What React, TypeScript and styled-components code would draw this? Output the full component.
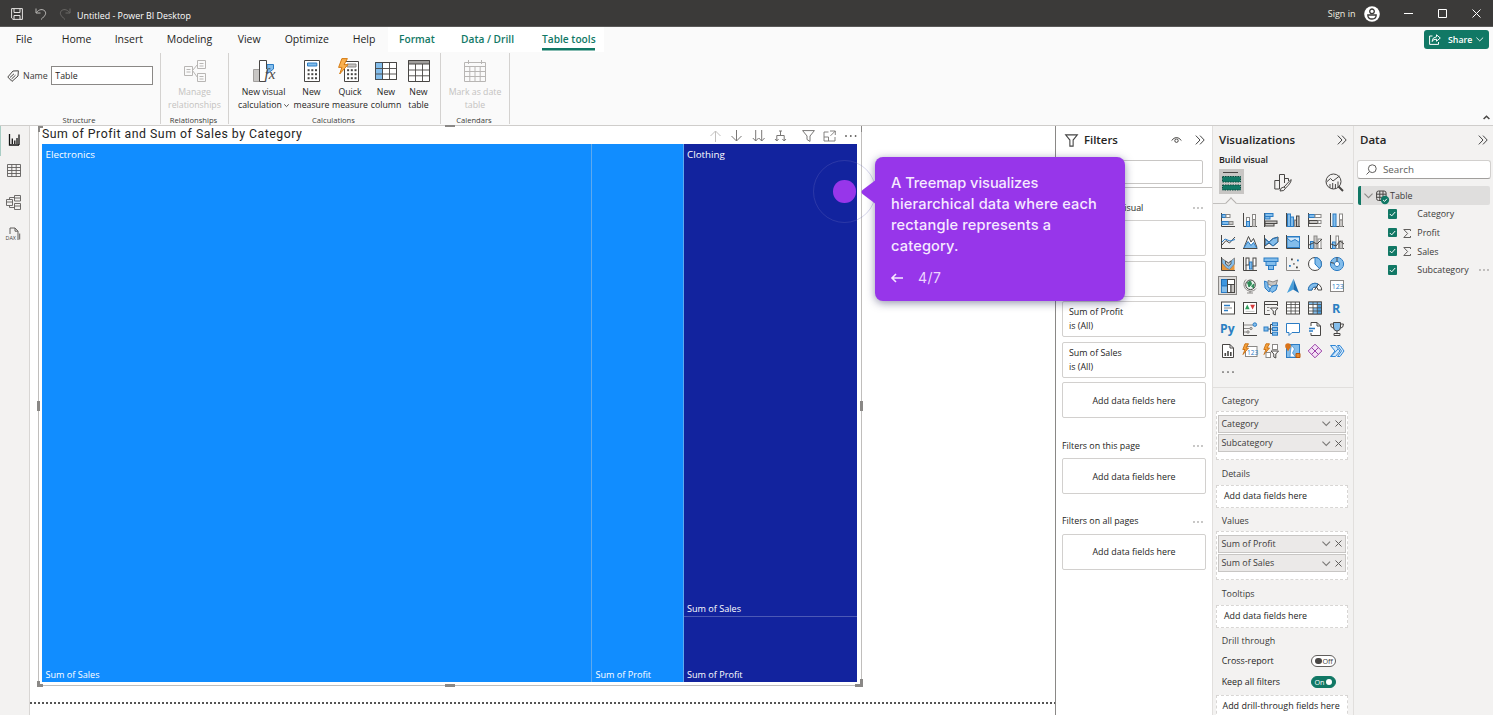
import React from "react";
import styled, { createGlobalStyle } from "styled-components";

const GREEN = "#117865";
const PURPLE = "#9736ea";
const UI = '"Open Sans", "Noto Sans", sans-serif';

const Global = createGlobalStyle`
  * { box-sizing: border-box; }
  html, body { margin: 0; padding: 0; overflow: hidden; }
  body { font-family: ${UI}; color: #252423; font-size: 9px; }
  svg { display: block; flex: none; overflow: visible; }
`;

const Window = styled.div`
  width: 1493px; height: 715px; display: flex; flex-direction: column;
  background: #fff; overflow: hidden; position: relative;
`;

const Text = styled.span<{ $s?: number; $w?: number; $c?: string; $ls?: number }>`
  font-size: ${(p) => p.$s ?? 9}px;
  font-weight: ${(p) => p.$w ?? 400};
  color: ${(p) => p.$c ?? "#252423"};
  letter-spacing: ${(p) => p.$ls ?? 0}px;
  white-space: nowrap;
  line-height: 12px;
`;

const Spacer = styled.div`flex: 1;`;

/* ---------- title bar ---------- */
const TitleBar = styled.header`
  height: 27px; background: #3b3a39; display: flex; align-items: center;
  padding: 1px 12px 0 11px; border-bottom: 1px solid #5a5958; flex: none;
`;
const QuickAccess = styled.div`display: flex; gap: 12px; width: 66px; align-items: center;`;
const DocTitle = styled(Text)`padding-top: 5px;`;
const SignIn = styled(Text)`margin-right: 8px;`;
const WindowButtons = styled.div`display: flex; align-items: center; gap: 25px; margin-left: 24.5px;`;

/* ---------- tabs ---------- */
const TabBar = styled.nav`
  height: 25px; background: #fafafa; display: flex; align-items: stretch; padding-left: 15.7px; flex: none;
`;
const Tab = styled.div<{ $w: number; $hot?: boolean }>`
  width: ${(p) => p.$w}px; flex: none; display: flex; align-items: center; padding-bottom: 2px;
  font-size: 10.5px; white-space: nowrap; color: ${(p) => (p.$hot ? GREEN : "#252423")};
  font-weight: ${(p) => (p.$hot ? 600 : 400)};
`;
const HotTabs = styled.div`
  display: flex; background: #fff; padding: 0 9px 0 11px; height: 25px; margin-left: -10.7px;
  ${Tab} { font-size: 10.2px; }
`;
const ActiveTab = styled(Tab)`box-shadow: inset 0 -1.5px 0 #fff, inset 0 -4px 0 ${GREEN};`;
const ShareButton = styled.button`
  margin: 3px 4px 0 auto; width: 65px; height: 18.5px; border: 0; border-radius: 3px; background: ${GREEN};
  color: #fff; display: flex; align-items: center; padding: 0 6px 0 5px; font-family: ${UI};
  ${Text} { margin: 1px 4px 0 7px; }
`;

/* ---------- ribbon ---------- */
const Ribbon = styled.section`
  height: 74px; background: #fafafa; border-bottom: 1px solid #cfcdcb; display: flex; flex: none;
`;
const Group = styled.div<{ $w: number }>`
  width: ${(p) => p.$w}px; height: 71px; position: relative; flex: none; display: flex; flex-direction: column;
  border-right: 1px solid #d4d2d0; margin-top: 1px;
`;
const GroupBody = styled.div`flex: 1; display: flex; padding-top: 7px;`;
const GroupName = styled.div`
  height: 12px; line-height: 12px; margin: 0 2px -2px 0; text-align: center; font-size: 7.6px; color: #3b3a39;
`;
const Command = styled.div<{ $w: number; $off?: boolean }>`
  width: ${(p) => p.$w}px; flex: none; display: flex; flex-direction: column; align-items: center;
  color: ${(p) => (p.$off ? "#c4c2c0" : "#252423")}; font-size: 8.75px; line-height: 12.5px; text-align: center;
  white-space: nowrap;
  svg { margin-bottom: 4px; }
`;
const CommandLine = styled.span`display: flex; align-items: center; gap: 2px; height: 12.5px; svg { margin: 1px 0 0; }`;
const NameField = styled.div`display: flex; align-items: center; height: 20px; margin: 5.5px 0 0 7px;
  & > ${Text} { padding: 1px 0 0 4px; }
`;
const NameInput = styled.div`
  width: 101.5px; height: 19px; border: 1px solid #8a8886; background: #fff; margin-left: 3.5px; padding: 1px 0 0 3px;
  display: flex; align-items: center;
`;

/* ---------- workspace ---------- */
const Workspace = styled.main`flex: 1; display: flex; min-height: 0;`;
const Rail = styled.aside`
  width: 30px; background: linear-gradient(#a9cdc4, #a9cdc4) 0 0 / 1px 30px no-repeat #f3f2f1;
  border-right: 1px solid #d8d6d4; flex: none; display: flex;
  flex-direction: column; align-items: center; padding: 7px 1.5px 0 0; gap: 17.3px;
`;
const Canvas = styled.section`
  width: 1025px; flex: none; display: flex; flex-direction: column; background: #fff; padding-left: 8px;
`;
const Visual = styled.div`
  width: 823.5px; height: 560px; border: 1px solid #c0bebc; border-top: 0; position: relative;
  display: flex; flex-direction: column; padding: 0 3.5px 3px 2.5px;
`;
const VisualHeader = styled.div`height: 18px; display: flex; align-items: center; flex: none;`;
const VisualTitle = styled.h1`
  margin: -3px 0 0 0.5px; font: 400 12.3px/14px Roboto, sans-serif; letter-spacing: 0.51px; flex: 1; white-space: nowrap;
`;
const VisualTools = styled.div`display: flex; align-items: center; gap: 8.7px; height: 18px; padding-top: 1px; margin-right: 0.5px;`;
const Handle = styled.i<{ $p: string; $h?: string }>`
  position: absolute; ${(p) => p.$p}; background: #8a8886; ${(p) => p.$h}
`;
const Treemap = styled.div`
  flex: 1; display: grid; grid-template-columns: 550px 92px 1fr; min-height: 0;
  color: #fff; font-size: 9.8px; line-height: 12px;
`;
const Leaf = styled.div<{ $bg: string; $r?: boolean }>`
  background: ${(p) => p.$bg}; padding: 5px 4px 1px; display: flex; flex-direction: column;
  justify-content: space-between; border-right: ${(p) => (p.$r ? "1px solid #5ea9ee" : "0")};
  span:last-child { font-size: 9.1px; }
`;
const Root = styled.span`flex: 1;`;
const Branch = styled.div`display: grid; grid-template-rows: 472px 1fr; min-height: 0;
  ${Leaf} { padding-left: 3.5px; }
  ${Leaf} + ${Leaf} { border-top: 1px solid #4c59b5; }
`;
const PageEdge = styled.div`
  height: 2px; margin: 15.5px 0 0 -8px;
  background: repeating-linear-gradient(90deg, #555 0 2px, #fff 2px 4px);
`;

/* ---------- panes ---------- */
const Pane = styled.aside<{ $w: number; $bg: string; $l?: string }>`
  width: ${(p) => p.$w}px; flex: none; background: ${(p) => p.$bg}; border-left: 1px solid ${(p) => p.$l ?? "#e1dfdd"};
  display: flex; flex-direction: column; overflow: hidden;
`;
const PaneHeader = styled.div<{ $l: number; $r: number }>`
  height: 28px; flex: none; display: flex; align-items: center; padding: 0 ${(p) => p.$r}px 0 ${(p) => p.$l}px;
`;
const FilterSearch = styled.div`height: 24px; margin: 6px 9px 3px 6px; border: 1px solid #c8c6c4; border-radius: 2px; flex: none;`;
const Rule = styled.div`height: 1px; background: #c2c0be; flex: none;`;
const FilterHeading = styled.div<{ $t: number }>`
  height: 26px; margin-top: ${(p) => p.$t}px; padding: 1px 9px 0 6px; display: flex; align-items: center;
  justify-content: space-between; flex: none;
  svg { margin-top: 1px; }
`;
const Cards = styled.div`display: flex; flex-direction: column; gap: 4.5px; padding: 0 6px;`;
const Card = styled.div<{ $c?: boolean }>`
  height: 36px; border: 1px solid #d2d0ce; border-radius: 2px; background: #fff; flex: none;
  font-size: 8.9px; line-height: 14px; padding: 3px 6px; white-space: pre-line; color: #252423;
  ${(p) => p.$c && "text-align: center; padding-top: 10.5px;"}
`;

const Modes = styled.div`
  height: 36.5px; flex: none; display: flex; align-items: flex-start; border-bottom: 1px solid #c2c0be; padding: 1.5px 0 0 6px;
  position: relative;
`;
const ModeTile = styled.div`width: 25px; height: 25px; background: #c8c6c4; display: grid; place-items: center; margin: 0.5px 30px 0 0;`;
const ModeIcon = styled.div<{ $r?: number }>`margin: 4px ${(p) => p.$r ?? 0}px 0 0;`;
const Notch = styled.i`
  position: absolute; left: 14px; bottom: -4.5px; width: 8px; height: 8px; transform: rotate(45deg);
  background: #f3f2f1; border: solid #b3b0ad; border-width: 1px 0 0 1px;
`;
const Gallery = styled.div`
  display: grid; grid-template-columns: repeat(6, 21.8px); grid-auto-rows: 21.8px; place-items: center;
  padding: 6px 0 0 4px; flex: none;
`;
const Tile = styled.div<{ $on?: boolean }>`
  width: 19px; height: 19px; display: grid; place-items: center;
  border: 1px solid ${(p) => (p.$on ? "#8a8886" : "transparent")}; background: ${(p) => (p.$on ? "#dddbd9" : "none")};
`;
const More = styled.div`height: 25.5px; padding: 8.5px 0 0 9px; border-bottom: 1px solid #e1dfdd; flex: none;`;
const WellName = styled.div<{ $h: number; $t?: number }>`
  height: ${(p) => p.$h}px; padding: ${(p) => p.$t ?? 4}px 0 0 8.7px; display: flex; align-items: center; flex: none;
`;
const Well = styled.div<{ $h: number; $pl?: number }>`
  height: ${(p) => p.$h}px; margin: 0 5px 0 3px; background: #fff; border: 1px dashed #d8d6d4; flex: none;
  display: flex; flex-direction: column; padding: 2.5px 1px 0 0.5px; gap: 1.5px;
  & > ${Text} { padding: 1.5px 0 0 ${(p) => p.$pl ?? 6.5}px; }
`;
const Chip = styled.div`
  height: 18.2px; background: #ebe9e8; border: 1px solid #c8c6c4; display: flex; align-items: center;
  padding: 0 3px 0 3px; gap: 5px; flex: none;
`;
const ToggleRow = styled.div<{ $h: number }>`
  height: ${(p) => p.$h}px; display: flex; align-items: center; padding: 0 17px 0 8.7px; justify-content: space-between; flex: none;
`;
const Toggle = styled.div<{ $on?: boolean }>`
  width: 25px; height: 12.5px; border-radius: 7px; border: 1px solid ${(p) => (p.$on ? GREEN : "#605e5c")};
  background: ${(p) => (p.$on ? GREEN : "#fff")}; color: ${(p) => (p.$on ? "#fff" : "#3b3a39")};
  display: flex; flex-direction: ${(p) => (p.$on ? "row-reverse" : "row")}; align-items: center; gap: 1px;
  padding: 0 3px; font-size: 7.2px; line-height: 10px;
  &::before { content: ""; width: 6.5px; height: 6.5px; flex: none; border-radius: 50%; background: ${(p) => (p.$on ? "#fff" : "#484644")}; }
`;

const DataSearch = styled.div`
  height: 19px; margin: 6px 2px 7px 3px; background: #fff; border: 1px solid #d2d0ce; border-bottom-color: #a19f9d; border-radius: 3px;
  display: flex; align-items: center; padding-left: 8px; gap: 6px; flex: none;
`;
const TableRow = styled.div`
  height: 19px; margin: 0 3px 0 3.5px; background: #dfdedd; border-left: 3px solid ${GREEN}; border-radius: 2px;
  display: flex; align-items: center; padding-left: 3px; flex: none;
`;
const FieldRow = styled.div`height: 18.7px; display: flex; align-items: center; padding: 0 4px 0 33.5px; flex: none;`;
const Checkbox = styled.div`width: 9.5px; height: 9.5px; background: ${GREEN}; border-radius: 1px; display: grid; place-items: center; margin-top: -1px;`;
const SigmaSlot = styled.div`width: 20.3px; padding-left: 6px;`;

/* ---------- tour ---------- */
const Beacon = styled.div`
  position: absolute; left: 813px; top: 160px; width: 63px; height: 63px; border-radius: 50%;
  border: 1px solid rgba(110, 110, 190, 0.28); display: grid; place-items: center;
  &::after { content: ""; width: 22.5px; height: 22.5px; border-radius: 50%; background: ${PURPLE}; }
`;
const Callout = styled.div`
  position: absolute; left: 875px; top: 157px; width: 250px; height: 144px; border-radius: 8px; background: ${PURPLE};
  box-shadow: 0 2px 9px rgba(40, 40, 90, 0.5); padding: 15.5px 16px; color: #f6e9ff;
`;
const Pointer = styled.svg`position: absolute; left: -14.5px; top: 22px;`;
const CalloutText = styled.p`margin: 0; font: 500 14.6px/21px Inter, sans-serif; letter-spacing: 0.16px; white-space: pre-line;
  &::first-line { letter-spacing: -0.05px; }
`;
const Steps = styled.div`display: flex; align-items: center; gap: 15px; margin-top: 11.5px; font: 400 14px/20px Inter, sans-serif; letter-spacing: 0.4px; color: #ecd5ff;`;

/* ---------- drawings ---------- */
type SP = { w?: number; h?: number; vb?: string; c?: string; sw?: number; children: React.ReactNode };
const Svg = ({ w = 16, h = w, vb, c = "#444", sw = 1, children }: SP) => (
  <svg width={w} height={h} viewBox={vb ?? `0 0 ${w} ${h}`} fill="none" stroke={c} strokeWidth={sw}>{children}</svg>
);
const ChevDown = ({ w = 8, c = "#797775", sw = 1 }: { w?: number; c?: string; sw?: number }) => (
  <Svg w={w} h={w * 0.6} vb="0 0 10 6" c={c} sw={sw * 1.2}><path d="M.5 .8 5 5.2 9.5 .8" /></Svg>
);
const Collapse = () => <Svg w={10} h={10} c="#444"><path d="M.8 .6 5 5 .8 9.4M5 .6 9.2 5 5 9.4" /></Svg>;
const Dots = ({ c = "#605e5c", s = 1, g = 4 }: { c?: string; s?: number; g?: number }) => (
  <Svg w={g * 2 + 2} h={2} c="none"><g fill={c}><circle cx="1" cy="1" r={s * 0.7} /><circle cx={1 + g} cy="1" r={s * 0.7} /><circle cx={1 + 2 * g} cy="1" r={s * 0.7} /></g></Svg>
);

const K = "#484644", BL = "#83bdeb", BS = "#2b7cc4", GR = "#c8c6c4", GS = "#8a8886";
const Box = ({ x, y, w, h, f = "none", s = "none" }: { x: number; y: number; w: number; h: number; f?: string; s?: string }) => (
  <rect x={x} y={y} width={w} height={h} fill={f} stroke={s} />
);
const Axes = () => <path d="M1.5 1V14.5H15" stroke={K} />;
const Axis = () => <path d="M1.5 1V15" stroke={K} />;

const visuals: React.ReactNode[] = [
  <><Axes /><Box x={2} y={2.5} w={4} h={3} f={BL} s={BS} /><Box x={6} y={2.5} w={4} h={3} f="#fff" s={GS} /><Box x={2} y={9.5} w={7} h={3} f={BL} s={BS} /><Box x={9} y={9.5} w={4} h={3} f={GR} s={GS} /></>,
  <><Axes /><Box x={4.5} y={5.5} w={3} h={4} f="#fff" s={GS} /><Box x={4.5} y={9.5} w={3} h={5} f={BL} s={BS} /><Box x={10.5} y={2.5} w={3} h={5} f="#fff" s={GS} /><Box x={10.5} y={7.5} w={3} h={7} f={GR} s={GS} /></>,
  <><Axis /><Box x={2} y={1.5} w={8} h={3} f={BL} s={BS} /><Box x={2} y={4.5} w={5} h={2.5} f={BL} s={BS} /><Box x={2} y={9} w={12} h={2.5} f={GR} s={K} /><Box x={2} y={11.5} w={9} h={2.5} f={GR} s={K} /></>,
  <><Axes /><Box x={2.5} y={2} w={3} h={12.5} f={BL} s={BS} /><Box x={5.5} y={5} w={3} h={9.5} f={BL} s={BS} /><Box x={9.5} y={8} w={2} h={6.5} f={GR} s={GS} /><Box x={11.5} y={4} w={2.5} h={10.5} f={GR} s={K} /></>,
  <><Axis /><Box x={2} y={2.5} w={6} h={3} f={BL} s={BS} /><Box x={8} y={2.5} w={6} h={3} f="#fff" s={GS} /><Box x={2} y={8.5} w={9} h={3} f={GR} s={K} /><Box x={11} y={8.5} w={3} h={3} f="#fff" s={GS} /><path d="M1.5 14.5H14" stroke={GS} /></>,
  <><Axes /><Box x={4} y={2} w={3} h={12.5} f={BL} s={BS} /><Box x={10.5} y={2} w={3} h={6} f="#fff" s={GS} /><Box x={10.5} y={8} w={3} h={6.5} f={GR} s={GS} /></>,
  <><Axes /><path d="M2 11 6 6.5 9.5 9 15 3" stroke={K} /><path d="M2 8 5 5 10 7 15 5.5" stroke={BS} /></>,
  <><path d="M2 13.5 6.5 2.5 9 8 11.5 4.5 15 13.5Z" fill="#fff" stroke={K} /><path d="M1.5 14.5 6 7.5 9 11.5 11.5 8.5 15 14.5Z" fill={BL} stroke={BS} /><path d="M1 14.5H15.3" stroke={K} /></>,
  <><path d="M2 5 6 8 10 4.5 15 3V8L10 12 6 9 2 12Z" fill={BL} /><path d="M2 11 6 8.5 10 12 15 8M2 4.5 6 8 10 4.5 15 3.5" stroke={BS} /><Axes /></>,
  <><Box x={2} y={2.5} w={12.5} h={11} f={BL} s={BS} /><path d="M2 4 6 7.5 10 5.5 14.5 8.5V3H2Z" fill="#d5e9fa" stroke={BS} /><Axes /></>,
  <><Axes /><Box x={3.5} y={7.5} w={3} h={7} f={BL} s={BS} /><Box x={7} y={2} w={3} h={12.5} f={GR} s={GS} /><Box x={11} y={5} w={3} h={9.5} f="#fff" s={GS} /><path d="M2 11 7 8.5 10 10 15 5" stroke={K} /></>,
  <><Axes /><Box x={3.5} y={8} w={3} h={6.5} f={BL} s={BS} /><Box x={7} y={2} w={2.5} h={12.5} f="#fff" s={GS} /><Box x={10.5} y={7} w={3} h={7.5} f={GR} s={GS} /><path d="M2 10 7 12 11 7 15 10" stroke={K} /></>,
  <><Box x={2} y={8} w={12.5} h={6.5} f="#e8973c" /><path d="M2 2.5 5.5 5 8.5 7 14.5 2V8L9.5 13.5 6.5 12 2 7Z" fill={BL} stroke={GS} /><path d="M5.5 5 8.5 7 11 5V8L8.5 10 5.5 8Z" fill={GR} stroke={K} strokeWidth=".8" /><Axes /></>,
  <><Axes /><Box x={4} y={2} w={3} h={7} f="#fff" s={K} /><Box x={7.5} y={6} w={2.5} h={7} f={BL} s={BS} /><Box x={11} y={2} w={3} h={8} f="#fff" s={K} /><path d="M4 9V14M11 10V14" stroke={K} /></>,
  <><Box x={1} y={2} w={14} h={3.5} f={BL} s={BS} /><Box x={3} y={5.5} w={10} h={4} f={BL} s={BS} /><Box x={5.5} y={9.5} w={5} h={4} f={BL} s={BS} /></>,
  <><path d="M1.5 1V14.5H15" stroke={GS} /><g fill={K} stroke="none"><rect x="6" y="2.5" width="1.8" height="1.8" /><rect x="12" y="3.5" width="1.8" height="1.8" fill={BS} /><rect x="4" y="9" width="1.8" height="1.8" fill={BS} /><rect x="8" y="7" width="1.8" height="1.8" fill={GS} /><rect x="11" y="10.5" width="1.8" height="1.8" /></g></>,
  <><circle cx="8" cy="8" r="6.5" fill="#fff" stroke={K} /><path d="M8 8V1.5A6.5 6.5 0 0 1 12.5 12.7Z" fill={BL} stroke={BS} /></>,
  <><circle cx="8" cy="8" r="4.6" stroke={BL} strokeWidth="3.6" /><circle cx="8" cy="8" r="6.6" stroke={BS} /><circle cx="8" cy="8" r="2.6" fill="#fff" stroke={BS} /><path d="M8 1.4V5.4M1.6 6.5 5 7.2" stroke={K} /></>,
  <><Box x={1.5} y={1.5} w={6} h={6.5} f="#3c96e0" s="#1d6bb0" /><Box x={1.5} y={8} w={6} h={6.5} f={BL} s={BS} /><Box x={7.5} y={1.5} w={7} h={5} f="#fff" s={K} /><Box x={7.5} y={6.5} w={3.5} h={8} f="#fff" s={K} /><Box x={11} y={6.5} w={3.5} h={8} f={GR} s={K} /></>,
  <><circle cx="8.5" cy="6.8" r="4.8" fill="#e8f3ec" stroke={K} /><path d="M5.5 4.5 8.5 3 9.5 6 7 9ZM9.5 8 12 6 11.5 10Z" fill="#2e8b57" stroke="#2e8b57" /><path d="M4 1.5C0 5 2 12.5 8 13.2 11 13.4 13 12 14 10.5M8 13V15M5 15H11" stroke={GS} /></>,
  <><path d="M1.5 3 5 4.5V9L8 11 6 14 2 10Z" fill={BL} stroke={BS} /><path d="M5 2.5 10 4 14.5 2 13 7 9 8 5 6Z" fill={GR} stroke={GS} /><path d="M9 8 14.5 7 13 12 9 14.5 6.5 12Z" fill={BL} stroke={BS} /></>,
  <><path d="M8.5 .8 14 15 8.2 11.5Z" fill="#1f6fb2" stroke="none" /><path d="M8.5 .8 2 15 8.2 11.5Z" fill="#48a0dc" stroke="none" /></>,
  <><path d="M1.3 12A6.7 6.7 0 0 1 14.7 12H11A3 3 0 0 0 5 12Z" fill="#fff" stroke={K} /><path d="M1.3 12A6.7 6.7 0 0 1 11 6L9.5 9.3A3 3 0 0 0 5 12Z" fill={BL} stroke={BS} /><path d="M7.5 12 11.5 6" stroke={K} /></>,
  <><Box x={1.5} y={2.5} w={13} h={11} f="#fff" s={GS} /><text x="2.7" y="11" fontSize="7" fontFamily="Open Sans" fill={BS} stroke="none">123</text></>,
  <><Box x={1.5} y={2} w={13} h={12} f="#fff" s={K} /><path d="M4 5.5H10M4 10.5H8" stroke={BS} strokeWidth="1.6" /><path d="M4 8H12" stroke={GS} /></>,
  <><Box x={1.5} y={2.5} w={13} h={11} f="#fff" s={K} /><path d="M3 9.2 5.3 4.6 7.6 9.2Z" fill="#2e9e5b" stroke="none" /><path d="M8.2 4.8H13L10.6 9.4Z" fill="#d83b3b" stroke="none" /><path d="M3.5 11.4H12.5" stroke={GR} /></>,
  <><path d="M14.5 6V1.5H1.5V14.5H7" stroke={K} fill="none" /><path d="M1.5 4.5H14.5" stroke={K} /><path d="M4 7.5H6.5M4 10.5H6.5" stroke={GS} /><path d="M7.5 8H15L12.3 11V15L10.3 14V11Z" fill="#fff" stroke={K} /></>,
  <><Box x={1.5} y={2} w={13} h={12} f="#fff" s={K} /><path d="M1.5 4.5H14.5M1.5 7.8H14.5M1.5 11H14.5M6 2V14M10.3 2V14" stroke={K} strokeWidth=".8" /></>,
  <><Box x={1.5} y={2} w={13} h={12} f="#fff" s={K} /><Box x={1.5} y={2} w={13} h={2.5} f={BL} /><Box x={10.3} y={4.5} w={4} h={9.5} f="#4a9ede" /><Box x={6} y={7.8} w={4.3} h={6.2} f={BL} /><path d="M1.5 4.5H14.5M1.5 7.8H14.5M1.5 11H14.5M6 2V14M10.3 2V14M1.5 2H14.5V14H1.5Z" stroke={K} strokeWidth=".8" /></>,
  <text x="3" y="12.6" fontSize="12.5" fontWeight="700" fontFamily="Open Sans" fill="#2a7fc2" stroke="none">R</text>,
  <text x="0" y="12" fontSize="12.2" fontWeight="700" fontFamily="Open Sans" fill="#2a7fc2" stroke="none">Py</text>,
  <><path d="M1.5 1V14.5H15" stroke={K} /><path d="M2 4H11M2 7.5H8M2 11H5" stroke={GS} /><circle cx="12.8" cy="3.6" r="1.8" fill={BL} stroke={BS} /><circle cx="9" cy="7.5" r="1.2" fill={GR} stroke={GS} /><circle cx="6" cy="11" r="1.2" fill={GR} stroke={GS} /></>,
  <><path d="M5 8H7.5V3.5H9M7.5 8H9M7.5 8V12.5H9" stroke={K} /><Box x={1} y={6} w={4} h={4} f={BL} s={BS} /><Box x={9.5} y={1.8} w={5} h={3} f={BL} s={BS} /><Box x={9.5} y={6.5} w={5} h={3} f={BL} s={BS} /><Box x={9.5} y={11.2} w={5} h={3} f={BL} s={BS} /></>,
  <path d="M1.5 2.5H14.5V11.5H7L4 14.5V11.5H1.5Z" fill="#fff" stroke={BS} />,
  <><path d="M4 5V1.5H10L13.5 5V14.5H4V12" fill="#fff" stroke={K} /><path d="M10 1.5V5H13.5" stroke={K} /><path d="M2 7.5H8M2 10H6" stroke={BS} strokeWidth="1.5" /></>,
  <><path d="M4.5 1.5H11.5V6Q11.5 10 8 10 4.5 10 4.5 6Z" fill={BL} stroke={K} /><path d="M4.5 3H1.5Q1.5 7 4.8 7.3M11.5 3H14.5Q14.5 7 11.2 7.3M8 10V12.5M5 14.5V12.5H11V14.5Z" stroke={K} /></>,
  <><path d="M2.5 1.5H10L13.5 5V14.5H2.5Z" fill="#fff" stroke={K} /><path d="M10 1.5V5H13.5" stroke={K} /><path d="M5.3 13V10M8 13V8M10.8 13V9" stroke={K} strokeWidth="1.6" /></>,
  <><Box x={3.5} y={3.5} w={11.5} h={10} f="#fff" s={GS} /><text x="5" y="11.5" fontSize="6.5" fontFamily="Open Sans" fill={BS} stroke="none">123</text><path d="M3 .8 .8 6.5H3L1 11.5 6.5 5H4L6.5 .8Z" fill="#f5a13c" stroke="#c96d0c" strokeWidth=".9" /></>,
  <><path d="M3 .8 .8 6.5H3L1 11.5 6.5 5H4L6.5 .8Z" fill="#f5a13c" stroke="#c96d0c" strokeWidth=".9" /><Box x={9.5} y={1.5} w={5} h={5} f="#fff" s={GS} /><Box x={3} y={9.5} w={4.5} h={5} f="#fff" s={GS} /><path d="M8 8H15.5L12.8 11V15L10.8 14V11Z" fill="#fff" stroke={K} /></>,
  <><Box x={1.5} y={1.5} w={13} h={13} f={BL} s={BS} /><path d="M6.5 2 9.5 6 7.5 10 10.5 14H5L5.5 8Z" fill="#fff" stroke={BS} strokeWidth=".6" /><circle cx="3" cy="3" r="2.8" fill="#d9731a" stroke="none" /><path d="M.6 4 3 8.5 5.4 4Z" fill="#d9731a" stroke="none" /><path d="M11 10.5H15V14.5H11Z" fill="#e58a2e" stroke="#b8560a" /></>,
  <><path d="M8 1.2 14.8 8 8 14.8 1.2 8Z" fill="#f3e3f5" stroke="#9b3fa8" /><path d="M4.6 4.6 11.4 11.4M11.4 4.6 4.6 11.4" stroke="#9b3fa8" /></>,
  <><path d="M1.5 2.5H6.5L11 8 6.5 13.5H1.5L6 8Z" fill="#d5e9fa" stroke="#2f86d6" /><path d="M8.5 2.5H11L15 8 11 13.5H8.5L12.5 8Z" fill="#d5e9fa" stroke="#2f86d6" /><path d="M2.5 13 9 6" stroke="#2f86d6" /></>,
];

const Funnel = ({ w = 12 }: { w?: number }) => (
  <Svg w={w} vb="0 0 12 12" c="#444"><path d="M.6 .8H11.4L7.5 5.6V11.2H4.5V5.6Z" /></Svg>
);
const Bolt = () => <path d="M4 1 1 9H4L2 15 9.5 6.5H6L9 1Z" fill="#f9b04f" stroke="#d47a12" strokeWidth=".9" />;
const CalcKeys = () => (
  <g fill={K} stroke="none">
    {[9.2, 13.2, 17.2].map((y) => [6.6, 10.3, 14].map((x) => <rect key={`${x}-${y}`} x={x} y={y} width="2" height="2" />))}
  </g>
);

const Item = ({ children }: { children: string }) => (
  <Chip>
    <Text $s={8.9} $c="#3b3a39">{children}</Text><Spacer />
    <ChevDown w={8.5} /><Svg w={7} c="#605e5c"><path d="M.5 .5 6.5 6.5M6.5 .5 .5 6.5" /></Svg>
  </Chip>
);

const Field = ({ name, sum, more }: { name: string; sum?: boolean; more?: boolean }) => (
  <FieldRow>
    <Checkbox><Svg w={7} h={6} c="#fff"><path d="M.8 3 2.7 4.9 6.2 1" /></Svg></Checkbox>
    <SigmaSlot>{sum && <Svg w={8} h={9} c="#605e5c"><path d="M7.5 2V.5H.8L4.6 4.5 .8 8.5H7.5V7" /></Svg>}</SigmaSlot>
    <Text $s={8.9} $c="#3b3a39">{name}</Text><Spacer />{more && <Dots s={0.9} />}
  </FieldRow>
);

const RibbonCollapse = styled.div`align-self: flex-end; padding: 0 3px 5px 0;`;
const Gap = styled.i`width: 0; margin-left: -2.5px;`;
const EyeGap = styled.i`width: 13px;`;
const DrillGap = styled.div`height: 2.5px; flex: none;`;
const TableGlyph = styled.div`margin: 2px 0 0 3px; width: 14.5px;`;
const BuildTitle = styled.div`height: 13px; padding-left: 6px; font-size: 8.9px; font-weight: 600; line-height: 12px; flex: none;`;

export default function App() {
  return (
    <Window>
      <Global />
      <TitleBar>
        <QuickAccess>
          <Svg w={12} c="#e6e4e2"><path d="M.6 .6H11.4V11.4H2L.6 10ZM3 .6V4.5H9V.6M3 11.4V7.5H9V11.4" /></Svg>
          <Svg w={12} c="#bdbbb9"><path d="M1 .5V5H5.5M1.3 4.7C4 1 8 .8 10 3.2 11.5 5.5 10.5 7.5 6 11.5" /></Svg>
          <Svg w={12} c="#6b6967"><path d="M11 .5V5H6.5M10.7 4.7C8 1 4 .8 2 3.2 .5 5.5 1.5 7.5 6 11.5" /></Svg>
        </QuickAccess>
        <DocTitle $s={8.9} $c="#fff">Untitled - Power BI Desktop</DocTitle>
        <Spacer />
        <SignIn $s={9} $c="#f0eee0">Sign in</SignIn>
        <Svg w={16} c="#3b3a39" vb="-8 0 16 16"><circle cx="0" cy="8" r="7.8" fill="#fff" stroke="none" /><circle cx="0" cy="5.3" r="2.3" strokeWidth="1.3" /><path d="M-4.2 9H4.2Q4.2 13 0 13 -4.2 13 -4.2 9Z" strokeWidth="1.3" /></Svg>
        <WindowButtons>
          <Svg w={9} c="#fff"><path d="M0 4.5H9" /></Svg>
          <Svg w={9} c="#fff"><path d="M.5 .5H8.5V8.5H.5Z" /></Svg>
          <Svg w={9} c="#fff"><path d="M.5 .5 8.5 8.5M8.5 .5 .5 8.5" /></Svg>
        </WindowButtons>
      </TitleBar>

      <TabBar>
        <Tab $w={46}>File</Tab><Tab $w={53}>Home</Tab><Tab $w={52}>Insert</Tab><Tab $w={71}>Modeling</Tab>
        <Tab $w={47}>View</Tab><Tab $w={68}>Optimize</Tab><Tab $w={46}>Help</Tab>
        <HotTabs>
          <Tab $w={62} $hot>Format</Tab><Tab $w={81} $hot>Data / Drill</Tab><ActiveTab $w={53} $hot>Table tools</ActiveTab>
        </HotTabs>
        <ShareButton>
          <Svg w={12} h={11} c="#fff"><path d="M3.5 2H.6V10.4H9.5V8M7.5 .8 11.3 4 7.5 7.2V5.2Q4.5 5 3 7.5 3.3 3.2 7.5 2.8Z" /></Svg>
          <Text $s={8.8} $w={600} $c="#fff">Share</Text><ChevDown w={7.5} c="#fff" />
        </ShareButton>
      </TabBar>

      <Ribbon>
        <Group $w={161}>
          <GroupBody>
            <NameField>
              <Svg w={12} c={K}><path d="M6 1 11.4 .8 11 6 5 11.4 .8 7Z M3 7.5 7 3.8M4.5 9 8.5 5.2" /></Svg>
              <Text $s={8.9} $c="#3b3a39">Name</Text>
              <NameInput><Text $s={8.8}>Table</Text></NameInput>
            </NameField>
          </GroupBody>
          <GroupName>Structure</GroupName>
        </Group>
        <Group $w={68}>
          <GroupBody>
            <Command $w={67} $off>
              <Svg w={22} h={22} c="#b8b6b4"><path d="M.5 6.5H8.5V15.5H.5ZM2.5 9.5H6.5M2.5 12H6.5M13.5 .5H21.5V8.5H13.5ZM15.5 3.5H19.5M15.5 6H19.5M13.5 13.5H21.5V21.5H13.5ZM15.5 16.5H19.5M15.5 19H19.5M13.5 4.5 8.5 10.5 13.5 17.5" /></Svg>
              Manage<br />relationships
            </Command>
          </GroupBody>
          <GroupName>Relationships</GroupName>
        </Group>
        <Group $w={212}>
          <GroupBody>
            <Command $w={69}>
              <Svg w={22} h={22} c={K}><path d="M.5 9.5H6.5V21.5H.5Z" fill="#c8c6c4" stroke="#a19f9d" /><path d="M14 4.5H20.5V9L14 14Z" fill={BL} stroke={BS} /><path d="M12 21.5H6.5V.5H13.5V9" fill="#fff" /><text x="11.5" y="18.5" fontSize="15" fontStyle="italic" fontFamily="Liberation Serif" fill={K} stroke="none">fx</text></Svg>
              <CommandLine>New visual</CommandLine>
              <CommandLine>calculation <ChevDown w={5} c={K} sw={1.6} /></CommandLine>
            </Command>
            <Command $w={27}>
              <Svg w={22} h={22} c={K}><path d="M3.5 .5H18.5V21.5H3.5Z" fill="#fff" /><path d="M6.5 3H15.8V6H6.5Z" fill={BL} stroke={BS} /><CalcKeys /></Svg>
              New<br />measure
            </Command>
            <Command $w={50}>
              <Svg w={22} h={22} c={K}><path d="M5.5 1.5H19.5V21.5H5.5Z" fill="#fff" /><path d="M8 4H17V7H8Z" fill={GR} stroke={GS} /><g transform="translate(1.5 0)"><CalcKeys /></g><g transform="translate(-1.5 -2.5) scale(1.1)"><Bolt /></g></Svg>
              Quick<br />measure
            </Command>
            <Command $w={22}>
              <Svg w={22} h={22} c={K}><path d="M.5 2.5H21.5V19.5H.5Z" fill="#fff" /><path d="M.5 2.5H7.5V19.5H.5Z" fill={BL} stroke={BS} /><path d="M.5 8.5H21.5M.5 14H21.5M14.5 2.5V19.5M7.5 2.5V19.5M.5 2.5H21.5V19.5H.5Z" strokeWidth=".9" /></Svg>
              New<br />column
            </Command>
            <Command $w={43}>
              <Svg w={22} h={22} c={K}><path d="M.5 .5H21.5V21.5H.5Z" fill="#fff" /><path d="M.5 .5H21.5V4H.5Z" fill="#a19f9d" /><path d="M.5 10H21.5M.5 15.8H21.5M7.5 4V21.5M14.5 4V21.5" strokeWidth=".9" /></Svg>
              New<br />table
            </Command>
          </GroupBody>
          <GroupName>Calculations</GroupName>
        </Group>
        <Group $w={69}>
          <GroupBody>
            <Command $w={68} $off>
              <Svg w={22} h={22} c="#b8b6b4"><path d="M.5 2.5H21.5V21.5H.5ZM.5 6.5H21.5M.5 11.5H21.5M.5 16.5H21.5M5.8 6.5V21.5M11 6.5V21.5M16.2 6.5V21.5M4.5 0V4M17.5 0V4" /></Svg>
              Mark as date<br />table
            </Command>
          </GroupBody>
          <GroupName>Calendars</GroupName>
        </Group>
        <Spacer />
        <RibbonCollapse><Svg w={7} h={5} c={K} sw={1.5}><path d="M.6 4 3.5 1.2 6.4 4" /></Svg></RibbonCollapse>
      </Ribbon>

      <Workspace>
        <Rail>
          <Svg w={12} h={13} c="#111" vb="0 0 12 13"><path d="M1.5 1V12H11M4.3 11V5.5M6.8 11V7.5M9 11V5M11 12V1.5" strokeWidth="1.3" /></Svg>
          <Svg w={14} h={14} c="#605e5c"><path d="M.5 1.5H13.5V13.5H.5ZM.5 4.5H13.5M.5 7.5H13.5M.5 10.5H13.5M4.8 1.5V13.5M9.2 1.5V13.5" strokeWidth=".9" /></Svg>
          <Svg w={15} h={15} c="#605e5c"><path d="M.5 4.5H6.5V10.5H.5ZM.5 7H6.5M8.5 .5H14.5V6H8.5ZM8.5 3H14.5M8.5 8.5H14.5V14.5H8.5ZM8.5 11H14.5M3.5 4.5V2.5H8.5M3.5 10.5V12.5H8.5" strokeWidth=".9" /></Svg>
          <Svg w={15} h={15} c="#605e5c"><path d="M4 7V1H9L12 4.2V13M9 1V4.2H12M13.7 6.5V12.5" /><text x="-.5" y="13" fontSize="5.4" fontFamily="Open Sans" fill="#484644" stroke="none">DAX</text></Svg>
        </Rail>

        <Canvas>
          <Visual>
            <VisualHeader>
              <VisualTitle>Sum of Profit and Sum of Sales by Category</VisualTitle>
              <VisualTools>
                <Svg w={13} h={12} c="#c2c0be"><path d="M6.5 12V1M1.5 6 6.5 1 11.5 6" /></Svg>
                <Svg w={13} h={12} c="#797775"><path d="M6.5 0V11M1.5 6 6.5 11 11.5 6" /></Svg>
                <Svg w={13} h={12} c="#797775"><path d="M3.7 0V11M.8 8 3.7 11 6.6 8M9.7 0V11M6.8 8 9.7 11 12.6 8" /></Svg>
                <Svg w={13} h={12} c="#797775"><path d="M6.5 1V5.5M2.8 11V5.5H10.2V11M1 9 2.8 11 4.6 9M8.4 9 10.2 11 12 9M5 1H8" /></Svg>
                <Gap />
                <Svg w={13} h={12} c="#797775"><path d="M.6 .6H12.4L8 6V11.4L5 9.5V6Z" /></Svg>
                <Svg w={13} h={12} c="#797775"><path d="M5.5 2H1V11H12V7M7 1H12.3V5M12.3 1 7.5 5.8M1 7H5.5V11" strokeWidth=".9" /></Svg>
                <Dots g={4.8} s={1.3} />
              </VisualTools>
            </VisualHeader>
            <Treemap>
              <Leaf $bg="#118dff" $r><Root>Electronics</Root><span>Sum of Sales</span></Leaf>
              <Leaf $bg="#118dff" $r><i /><span>Sum of Profit</span></Leaf>
              <Branch>
                <Leaf $bg="#12239e"><Root>Clothing</Root><span>Sum of Sales</span></Leaf>
                <Leaf $bg="#12239e"><i /><span>Sum of Profit</span></Leaf>
              </Branch>
            </Treemap>
            <Handle $p="left:-1px;top:0" $h="width:5px;height:2px" /><Handle $p="left:-1px;top:0" $h="width:2px;height:6px" />
            <Handle $p="left:406px;top:-1px" $h="width:10px;height:2px" /><Handle $p="left:406px;bottom:-2px" $h="width:10px;height:3px" />
            <Handle $p="left:-2px;top:275px" $h="width:3px;height:10px" /><Handle $p="right:-2px;top:275px" $h="width:3px;height:10px" />
            <Handle $p="left:-1px;bottom:-2px" $h="width:5px;height:3px" /><Handle $p="left:-2px;bottom:-2px" $h="width:3px;height:6px" />
            <Handle $p="right:-2px;bottom:-2px" $h="width:8px;height:3px" /><Handle $p="right:-2px;bottom:-2px" $h="width:3px;height:8px" />
            <Handle $p="right:-1px;top:0" $h="width:1px;height:6px" />
          </Visual>
          <PageEdge />
        </Canvas>

        <Pane $w={157} $bg="#fff" $l="#8a8886">
          <PaneHeader $l={9} $r={7.5}>
            <Funnel w={13} /><Text $s={11.4} $w={600}>&nbsp;&nbsp;Filters</Text><Spacer />
            <Svg w={11} h={8} c={K}><path d="M.6 4.5Q5.5 -1.5 10.4 4.5" /><circle cx="5.5" cy="4.7" r="1.7" /></Svg>
            <EyeGap /><Collapse />
          </PaneHeader>
          <FilterSearch />
          <Rule />
          <FilterHeading $t={6}><Text $s={8.9}>Filters on this visual</Text><Dots s={0.9} /></FilterHeading>
          <Cards>
            <Card />
            <Card />
            <Card>{"Sum of Profit\nis (All)"}</Card>
            <Card>{"Sum of Sales\nis (All)"}</Card>
            <Card $c>Add data fields here</Card>
          </Cards>
          <FilterHeading $t={14}><Text $s={8.9}>Filters on this page</Text><Dots s={0.9} /></FilterHeading>
          <Cards><Card $c>Add data fields here</Card></Cards>
          <FilterHeading $t={13.5}><Text $s={8.9}>Filters on all pages</Text><Dots s={0.9} /></FilterHeading>
          <Cards><Card $c>Add data fields here</Card></Cards>
        </Pane>

        <Pane $w={141} $bg="#f3f2f1">
          <PaneHeader $l={6} $r={6}><Text $s={11.5} $w={600}>Visualizations</Text><Spacer /><Collapse /></PaneHeader>
          <BuildTitle>Build visual</BuildTitle>
          <Modes>
            <ModeTile>
              <Svg w={21} h={21} c={GREEN}><path d="M2 1.5H17" stroke={K} /><rect x="1.5" y="5.5" width="18" height="5.5" fill={GREEN} stroke="#0a4a3e" strokeDasharray="1.5 1" /><rect x="1.5" y="14" width="18" height="5" fill={GREEN} stroke="#0a4a3e" strokeDasharray="1.5 1" /></Svg>
            </ModeTile>
            <ModeIcon $r={33}><Svg w={18} h={19} c={K}><path d="M.8 16V7.5H5.5V16ZM5.5 12V1.5H10.5V10M10.5 5.5H14.5V8M17 6.5 10 14M17 6.5Q18 9 11.5 15.2M10 14Q6.5 14 6 18 10.5 18.5 11.5 15.2Z" /></Svg></ModeIcon>
            <ModeIcon><Svg w={19} h={19} c={K}><circle cx="8.5" cy="8.5" r="7.5" /><path d="M1.5 9 5.5 5.5 8 8 14.5 3M5 15V11M7.7 16V10M10.4 16V11M13 14V8.5" /><path d="M13.5 13.5 18 18" strokeWidth="2" /></Svg></ModeIcon>
            <Notch />
          </Modes>
          <Gallery>{visuals.map((v, i) => <Tile key={i} $on={i === 18}><Svg w={16} vb="0 0 16 16">{v}</Svg></Tile>)}</Gallery>
          <More><Dots g={5} s={1.2} c={K} /></More>
          <WellName $h={23.5} $t={4}><Text $s={8.9} $c="#3b3a39">Category</Text></WellName>
          <Well $h={48.5}><Item>Category</Item><Item>Subcategory</Item></Well>
          <WellName $h={25}><Text $s={8.9} $c="#3b3a39">Details</Text></WellName>
          <Well $h={23}><Text $s={8.9}>Add data fields here</Text></Well>
          <WellName $h={23.5}><Text $s={8.9} $c="#3b3a39">Values</Text></WellName>
          <Well $h={48.5}><Item>Sum of Profit</Item><Item>Sum of Sales</Item></Well>
          <WellName $h={25}><Text $s={8.9} $c="#3b3a39">Tooltips</Text></WellName>
          <Well $h={23}><Text $s={8.9}>Add data fields here</Text></Well>
          <WellName $h={23}><Text $s={8.9} $w={500} $c="#3b3a39" $ls={0.1}>Drill through</Text></WellName>
          <ToggleRow $h={21}><Text $s={8.9}>Cross-report</Text><Toggle>Off</Toggle></ToggleRow>
          <ToggleRow $h={21}><Text $s={8.9}>Keep all filters</Text><Toggle $on>On</Toggle></ToggleRow>
          <DrillGap />
          <Well $h={24} $pl={5}><Text $s={8.95}>Add drill-through fields here</Text></Well>
        </Pane>

        <Pane $w={140} $bg="#f3f2f1">
          <PaneHeader $l={6} $r={5}><Text $s={11.5} $w={600}>Data</Text><Spacer /><Collapse /></PaneHeader>
          <DataSearch>
            <Svg w={11} c="#605e5c"><circle cx="6.3" cy="4.7" r="3.9" /><path d="M3.5 7.5 .5 10.5" /></Svg>
            <Text $s={9.8} $c="#605e5c">Search</Text>
          </DataSearch>
          <TableRow>
            <ChevDown w={9} c="#8a8886" />
            <TableGlyph>
              <Svg w={15} h={14} c={K}><rect x=".6" y="1" width="9.5" height="9.5" rx="2" /><path d="M.6 4.2H10M.6 7.3H10M3.8 1V10.5M7 1V10.5" /><circle cx="9" cy="10" r="4.2" fill={GREEN} stroke="none" /><path d="M7.1 10 8.5 11.4 10.9 8.8" stroke="#fff" /></Svg>
            </TableGlyph>
            <Text $s={8.9} $c="#3b3a39">Table</Text>
          </TableRow>
          <Field name="Category" /><Field name="Profit" sum /><Field name="Sales" sum /><Field name="Subcategory" more />
        </Pane>
      </Workspace>

      <Beacon />
      <Callout>
        <Pointer width="16" height="26" viewBox="0 0 16 26"><path d="M16 0V26L1.5 15Q-.5 13 1.5 11Z" fill={PURPLE} /></Pointer>
        <CalloutText>{"A Treemap visualizes\nhierarchical data where each\nrectangle represents a\ncategory."}</CalloutText>
        <Steps><Svg w={12} h={10} c="#f6e9ff" sw={1.6}><path d="M12 5H1M5 1 1 5 5 9" /></Svg>4/7</Steps>
      </Callout>
    </Window>
  );
}
